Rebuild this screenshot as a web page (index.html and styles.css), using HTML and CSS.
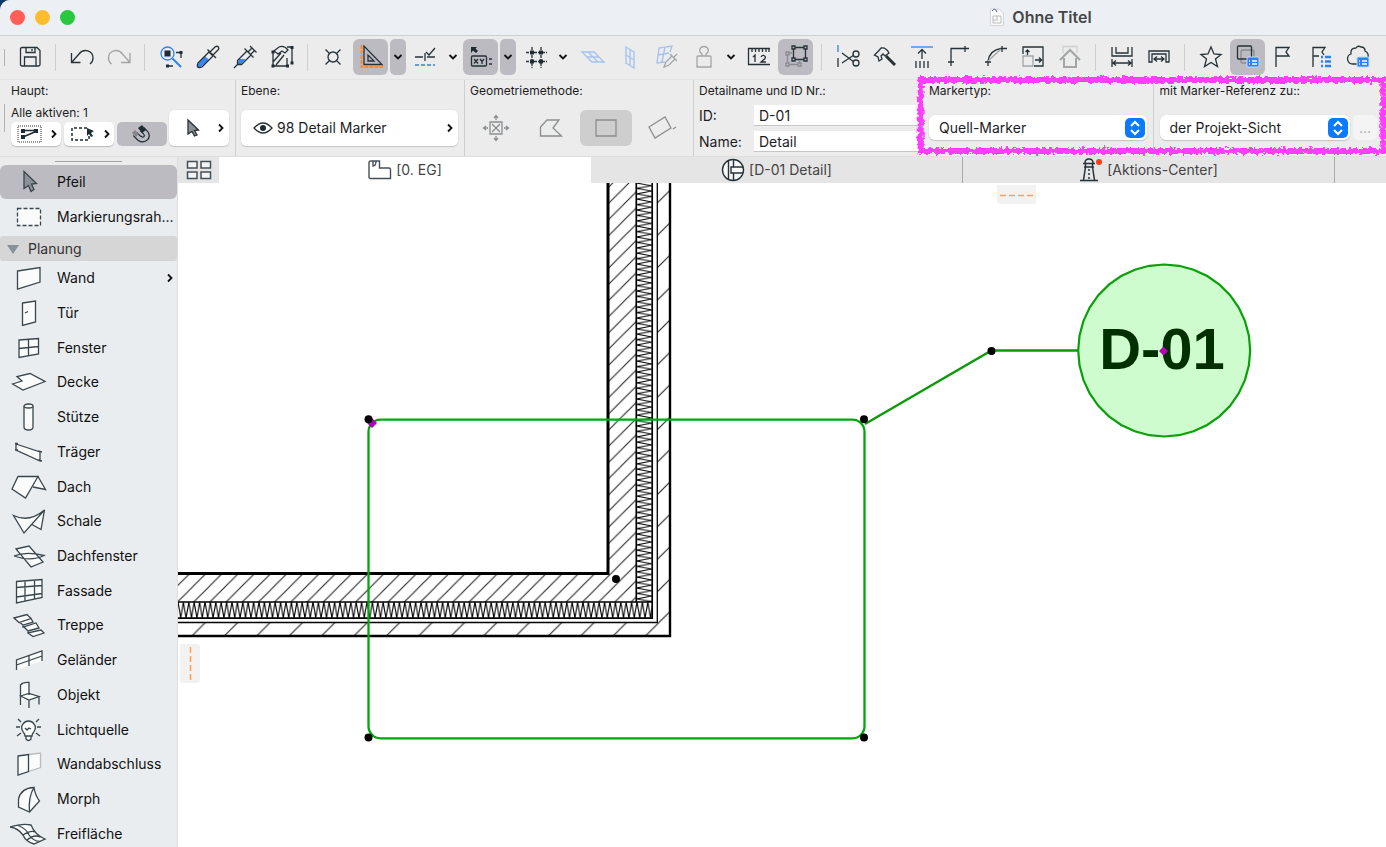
FILE: index.html
```html
<!DOCTYPE html>
<html lang="de">
<head>
<meta charset="utf-8">
<title>Ohne Titel</title>
<link rel="stylesheet" href="styles.css">
</head>
<body>
<div class="window">
<header class="titlebar">
  <div class="lights"><button class="light red" aria-label="Schließen"></button><button class="light yellow" aria-label="Minimieren"></button><button class="light green" aria-label="Zoomen"></button></div>
  <h1 class="doc-title"><svg width="16" height="20" viewBox="0 0 16 20"><path d="M1.500 2H10L14.500 6V18.500H1.500Z" fill="#fafafa" stroke="#d4d4d6"/><path d="M4 9H12V16H4ZM8 9V12M4 13H9" fill="none" stroke="#bbb"/><path d="M3 4Q6 0 8 5" fill="none" stroke="#4a5fb0"/></svg>Ohne Titel</h1>
</header>

<nav class="toolbar" aria-label="Werkzeuge">
  <span class="grip"></span>
  <button class="tb" aria-label="Sichern"><svg class="ic" viewBox="0 0 28 28"><path d="M6 4.500H21L24 7.500V21.500Q24 23 22.500 23H6Q4.500 23 4.500 21.500V6Q4.500 4.500 6 4.500ZM8.500 23V14H20V23M10 4.500V9.500H19V4.500M16 6V8"/></svg></button>
  <span class="sep"></span>
  <button class="tb" aria-label="Rückgängig"><svg class="ic" viewBox="0 0 28 28"><path d="M3.500 10V19.500H12.500M3.500 19.500L11 11C16 4.500 25 8 25 15C25 18 24 19.500 22 21"/></svg></button>
  <button class="tb" aria-label="Wiederholen"><svg class="ic dim" viewBox="0 0 28 28"><path d="M25 10V19.500H16M25 19.500L17.500 11C12.500 4.500 3.500 8 3.500 15C3.500 18 4.500 19.500 6.500 21"/></svg></button>
  <span class="sep"></span>
  <button class="tb" aria-label="Suchen"><svg class="ic" viewBox="0 0 28 28"><path d="M11 23H18M24 10V17M19 9.500H24" stroke-dasharray="5 2"/><path class="solid" d="M7.500 7.500H13.500V13.500H7.500ZM9 21.500H12V24.500H9ZM22.500 8H25.500V11H22.500Z"/><circle class="blue" cx="10.500" cy="10.500" r="6.500"/><path class="blue" d="M15.500 15.500L24 24" stroke-width="2"/></svg></button>
  <button class="tb" aria-label="Pipette"><svg class="ic" viewBox="0 0 28 28"><path class="bluefill" d="M4 21L11 13L15 17L7 24Q5 25 4 24Z"/><path d="M4 20L15 9L19 13L8 24Q5 25 3.500 24Q3 22 4 20ZM13.500 6.500L22 15M16 9L21 4Q23 2.500 24.500 4Q25.500 5.500 24 7L19 12"/></svg></button>
  <button class="tb" aria-label="Parameter übertragen"><svg class="ic" viewBox="0 0 28 28"><path class="bluefill" d="M8 16H14.500L10 21H6.500Z"/><path d="M3 25L6.500 21.500M6.500 21.500V17.500L16 8L20 12L10.500 21.500ZM13.500 5.500L22.500 14.500M17 9L21 5M19.500 11.500L23.500 7.500M19 3L25.500 9.500"/></svg></button>
  <button class="tb" aria-label="Gruppen aussetzen"><svg class="ic" viewBox="0 0 28 28"><path d="M5 8V23H19V15M24 5V20M19 4H24M5 19L13 10M8 22L16 12M6 8L11 4Q16 2 20 7L17 10L14 8L10 11Z"/><path class="solid" d="M3.500 7.500H6.500V10.500H3.500ZM3.500 21.500H6.500V24.500H3.500ZM18 21.500H21V24.500H18ZM22.500 3H25.500V6H22.500ZM22.500 18.500H25.500V21.500H22.500Z"/></svg></button>
  <span class="sep"></span>
  <button class="tb" aria-label="Fangpunkte"><svg class="ic" viewBox="0 0 28 28"><circle cx="13" cy="14" r="5"/><path d="M5.500 6.500L10 11M20.500 6.500L16 11M5.500 21.500L10 17M20.500 21.500L16 17"/></svg></button>
  <button class="tb on" aria-label="Hilfslinien"><svg class="ic" viewBox="0 0 28 28"><path d="M4.500 2V24H26" stroke="#ff8a2b" stroke-dasharray="4 1" stroke-width="2"/><path d="M7 3V21.500H25ZM11 12V18H17Z"/></svg></button>
  <button class="chev on" aria-label="Optionen Hilfslinien"><svg class="ck" viewBox="0 0 10 10"><path d="M1.500 3L5 6.500L8.500 3"/></svg></button>
  <button class="tb" aria-label="Fangrichtung"><svg class="ic" viewBox="0 0 28 28"><path d="M3 14H11M13 10V18M15 14H23M14 9L17 12L23 5"/><path class="blue" d="M3 22H23" stroke-dasharray="4 2"/></svg></button>
  <button class="chev" aria-label="Optionen Fangrichtung"><svg class="ck" viewBox="0 0 10 10"><path d="M1.500 3L5 6.500L8.500 3"/></svg></button>
  <button class="tb on" aria-label="Tracker"><svg class="ic" viewBox="0 0 28 28"><path class="solid" d="M4 4H10L8.500 5.500L11 8L9 10L6 7.500L4 10Z"/><rect x="4.500" y="13" width="15" height="10" rx="1"/><path d="M7 16L11 20.500M11 16L7 20.500M13 16L15 18.500L17 16M15 18.500V21M22 16H25M22 21H25"/></svg></button>
  <button class="chev on" aria-label="Optionen Tracker"><svg class="ck" viewBox="0 0 10 10"><path d="M1.500 3L5 6.500L8.500 3"/></svg></button>
  <button class="tb" aria-label="Raster"><svg class="ic" viewBox="0 0 28 28"><path d="M4 9.500H25M4 18.500H25M10 4V25M19 4V25" stroke-dasharray="3 1"/><path class="solid" d="M8 7.500H12V11.500H8ZM17 7.500H21V11.500H17ZM8 16.500H12V20.500H8ZM17 16.500H21V20.500H17Z"/></svg></button>
  <button class="chev spaced" aria-label="Optionen Raster"><svg class="ck" viewBox="0 0 10 10"><path d="M1.500 3L5 6.500L8.500 3"/></svg></button>
  <button class="tb" aria-label="Grundebene"><svg class="ic pale" viewBox="0 0 28 28"><path d="M3 9H15L25 19H13ZM9 9L19 19M8 14H20"/></svg></button>
  <button class="tb" aria-label="Wandebene"><svg class="ic pale" viewBox="0 0 28 28"><path d="M10 4L18 9V25L10 20ZM14 6V22M10 12L18 17"/></svg></button>
  <button class="tb" aria-label="Ebene aufnehmen"><svg class="ic pale" viewBox="0 0 28 28"><path d="M12 19L4 20L6 5L19 3L17 9M12 4L9 19M5 12L16 10"/><path class="dim" d="M11 24L13 19L19 13L22 16L16 22ZM17 11L24 18M21 14L24 11"/></svg></button>
  <button class="tb" aria-label="Schwerkraft"><svg class="ic dim" viewBox="0 0 28 28"><path d="M8 13H20Q21 13 21 14V24H7V14Q7 13 8 13ZM12 13V11Q9 9 10 6Q11 3.500 14 3.500Q17 3.500 18 6Q19 9 16 11V13"/></svg></button>
  <button class="chev" aria-label="Optionen Schwerkraft"><svg class="ck" viewBox="0 0 10 10"><path d="M1.500 3L5 6.500L8.500 3"/></svg></button>
  <button class="tb" aria-label="Messen"><svg class="ic" viewBox="0 0 28 28"><path d="M25 5.500H3.500V21.500H25M7 6V9M10.500 6V9M14 6V9M17.500 6V9M21 6V9M24 6V9M8 14L10 12V19M16 14Q17 12 19 12.500Q21 13.500 20 15.500L16 19H21"/></svg></button>
  <button class="tb on" aria-label="Gruppe bearbeiten"><svg class="ic" viewBox="0 0 28 28"><path class="faded" d="M7 10H10M5.500 12V20M7 21.500H16M17.500 20V18M4 9H7V12H4ZM4 20H7V23H4ZM16 20H19V23H16Z"/><path d="M13 4.500H22M23.500 6V15M22 16.500H13M11.500 15V6M10 3H13V6H10ZM22 3H25V6H22ZM10 15H13V18H10ZM22 15H25V18H22Z"/></svg></button>
  <span class="sep"></span>
  <button class="tb" aria-label="Trennen"><svg class="ic" viewBox="0 0 28 28"><path class="blue" d="M4 2V9"/><path d="M4 15V24M8 10L20 19M8 20L20 12"/><circle cx="22" cy="11" r="3"/><circle cx="22" cy="20" r="3"/></svg></button>
  <button class="tb" aria-label="Anpassen"><svg class="ic" viewBox="0 0 28 28"><path d="M3.500 12L8 7.500L10 5Q15 4 18 10L14 13L12 11L10 13L11 16L8 18L7 14Z"/><path d="M15 13L24 22" stroke-width="3"/></svg></button>
  <button class="tb" aria-label="Höhe anpassen"><svg class="ic" viewBox="0 0 28 28"><path class="blue" d="M3 4H25"/><path d="M14 16V7M10 10.500L14 6.500L18 10.500M8 18V25M12 18V25M16 18V25M20 18V25"/></svg></button>
  <button class="tb" aria-label="Verbinden"><svg class="ic" viewBox="0 0 28 28"><path d="M6 23V5.500H24M20 3V9M3 19H9"/></svg></button>
  <button class="tb" aria-label="Abrunden"><svg class="ic" viewBox="0 0 28 28"><path d="M6 23V18Q8 7 19 5.500H25M20 3V9M3 19H9"/><path class="dim" d="M6 18L19 6"/></svg></button>
  <button class="tb" aria-label="Größe ändern"><svg class="ic" viewBox="0 0 28 28"><path d="M4 11V4H24V23H15M8.500 12V7M6.500 9L8.500 7L10.500 9M16 17H22M20 14.500L22.500 17L20 19.500"/><path class="dim" d="M4 13H14V23H4Z"/></svg></button>
  <button class="tb" aria-label="Dach anpassen"><svg class="ic dim" viewBox="0 0 28 28"><path d="M7 10V3.500H21V10" opacity=".4"/><path d="M4 17L14 7L24 17M8 15V24H20V15" stroke-width="2"/></svg></button>
  <span class="sep"></span>
  <button class="tb" aria-label="Bemaßung"><svg class="ic" viewBox="0 0 28 28"><path d="M4 4V13H24V4M8 4V10H20V4M4 16V24M24 16V24M5 20H23M8 17.500L5 20L8 22.500M20 17.500L23 20L20 22.500"/></svg></button>
  <button class="tb" aria-label="Innenbemaßung"><svg class="ic" viewBox="0 0 28 28"><path d="M4 19V8H24V19H21V11H7V19ZM9 16H19M12 13.500L9 16L12 18.500M16 13.500L19 16L16 18.500"/></svg></button>
  <span class="sep"></span>
  <button class="tb" aria-label="Favoriten"><svg class="ic" viewBox="0 0 28 28"><path d="M14 4L17 11L24 11.500L18.500 16L20.500 23.500L14 19.500L7.500 23.500L9.500 16L4 11.500L11 11Z"/></svg></button>
  <button class="tb on" aria-label="Ausschnitte"><svg class="ic" viewBox="0 0 28 28"><rect class="faded" x="7" y="7" width="13" height="13" rx="2"/><rect x="3.500" y="3" width="14" height="13" rx="1"/><rect class="tile" x="13" y="14" width="12" height="10" rx="1"/><path class="rows" d="M15 18H16M18 18H23M15 21H16M18 21H23"/></svg></button>
  <button class="tb" aria-label="Markierung"><svg class="ic" viewBox="0 0 28 28"><path d="M5 24V4.500H18L15 9L18 13H5"/></svg></button>
  <button class="tb" aria-label="Markierungsliste"><svg class="ic" viewBox="0 0 28 28"><path d="M5 24V4.500H17L14 9L16 12M5 13H11"/><path class="blue" d="M13 14H15M17 14H23M13 18.500H15M17 18.500H23M13 23H15M17 23H23" stroke-width="2.500"/></svg></button>
  <button class="tb" aria-label="Cloud"><svg class="ic" viewBox="0 0 28 28"><path d="M12 21H8Q3 21 2.500 16Q2.500 12 6 11Q5 5 11 5Q13 2 16 4Q20 4 20 8Q24 10 23 14"/><rect class="tile" x="12" y="14" width="12" height="10" rx="1"/><path class="rows" d="M14 18H15M17 18H22M14 21H15M17 21H22"/></svg></button>
  <button class="tb" aria-label="Kamera"><svg class="ic" viewBox="0 0 28 28"><rect x="5" y="8" width="18" height="12" rx="2"/></svg></button>
</nav>

<section class="infobar" aria-label="Infofenster">
  <div class="panel haupt">
    <span class="grip low"></span>
    <p class="cap">Haupt:</p>
    <div class="body">
      <div class="sel">
        <p class="cap">Alle aktiven: 1</p>
        <div class="trio">
          <button class="mini" aria-label="Auswahl"><svg width="26" height="18" viewBox="0 0 26 18"><rect x="1" y="1" width="23" height="16" fill="none" stroke="#333" stroke-dasharray="1 1"/><path d="M5 5.500H20M6 12L20 6" fill="none" stroke="#1d2b33" stroke-width="1.500"/><path fill="#1d2b33" d="M4 4H8V8H4ZM4 10H8V14H4ZM17 4H21V8H17Z"/></svg><svg class="ck" viewBox="0 0 10 10"><path d="M3 1.500L6.500 5L3 8.500"/></svg></button>
          <button class="mini" aria-label="Rahmen"><svg width="26" height="18" viewBox="0 0 26 18"><path d="M17 3H2V15H19V9" fill="none" stroke="#1d2b33" stroke-dasharray="3 2" stroke-width="1.500"/><path fill="#1d2b33" d="M17 3L24 6L21 8L23 11L21 12L19 9L17 11Z"/></svg><svg class="ck" viewBox="0 0 10 10"><path d="M3 1.500L6.500 5L3 8.500"/></svg></button>
          <button class="mini pressed" aria-label="Magnet"><svg width="22" height="20" viewBox="0 0 22 20"><path d="M5 10L9 14Q13 17 16 14Q18 11 15 8L12 5" fill="none" stroke="#1d2b33" stroke-width="6"/><path d="M5 10L9 14Q13 17 16 14Q18 11 15 8L12 5" fill="none" stroke="#bcbbc1" stroke-width="3.500"/><path d="M2 9L5 6L9 10L6 13Z" fill="#84868b"/><path d="M8 4L12 1L16 6L12 9Z" fill="#1d2b33"/></svg></button>
        </div>
      </div>
      <button class="field arrow-btn" aria-label="Pfeilwerkzeug"><svg width="16" height="20" viewBox="0 0 16 20"><path d="M3 2L13.500 12L9.500 12.500L12 17L9.500 18L7 13.500L3 16Z" fill="#8d9296" stroke="#263238" stroke-width="1.300"/></svg><svg class="ck" viewBox="0 0 10 10"><path d="M3 1.500L6.500 5L3 8.500"/></svg></button>
    </div>
  </div>
  <div class="panel">
    <p class="cap">Ebene:</p>
    <div class="body"><button class="field layer"><svg width="20" height="14" viewBox="0 0 20 14"><path d="M1 7Q10 -3 19 7Q10 17 1 7Z" fill="#fff" stroke="#263238" stroke-width="1.300"/><circle cx="10" cy="7" r="3" fill="#1d2b33"/></svg><span class="grow">98 Detail Marker</span><svg class="ck" viewBox="0 0 10 10"><path d="M3 1.500L6.500 5L3 8.500"/></svg></button></div>
  </div>
  <div class="panel">
    <p class="cap">Geometriemethode:</p>
    <div class="body geo">
      <button class="gm" aria-label="Automatisch"><svg class="ic grey" viewBox="0 0 28 28"><path d="M8 8H20V20H8ZM10 10L18 18M18 10L10 18M14 6V2M12 4L14 1.500L16 4M14 22V26M12 24L14 26.500L16 24M6 14H2M4 12L1.500 14L4 16M22 14H26M24 12L26.500 14L24 16"/></svg></button>
      <button class="gm" aria-label="Polygon"><svg class="ic grey" viewBox="0 0 28 28"><path d="M3.500 22V13L10 6H22L16 14L24.500 22Z"/></svg></button>
      <button class="gm pressed" aria-label="Rechteck"><svg class="ic grey" viewBox="0 0 28 28"><path d="M4 6H24V22H4Z"/></svg></button>
      <button class="gm" aria-label="Gedrehtes Rechteck"><svg class="ic grey" viewBox="0 0 28 28"><path d="M2 13L18 3L24 14L8 24ZM26 15L29 13"/></svg></button>
    </div>
  </div>
  <div class="panel detail">
    <p class="cap">Detailname und ID Nr.:</p>
    <div class="pairs">
      <label for="did">ID:</label><input id="did" type="text" value="D-01">
      <label for="dname">Name:</label><input id="dname" type="text" value="Detail">
    </div>
  </div>
  <div class="marked">
    <div class="panel">
      <label class="cap" for="mtype">Markertyp:</label>
      <div class="body low-body"><div class="pop"><select id="mtype"><option>Quell-Marker</option></select><svg class="knob" viewBox="0 0 20 20"><path d="M6 8L10 4L14 8M6 12L10 16L14 12"/></svg></div></div>
    </div>
    <div class="panel">
      <label class="cap" for="mref">mit Marker-Referenz zu::</label>
      <div class="body low-body"><div class="pop"><select id="mref"><option>der Projekt-Sicht</option></select><svg class="knob" viewBox="0 0 20 20"><path d="M6 8L10 4L14 8M6 12L10 16L14 12"/></svg></div><button class="more" disabled>...</button></div>
    </div>
    <svg class="scribble" aria-hidden="true">
      <defs><filter id="rough" x="-5%" y="-10%" width="110%" height="120%"><feTurbulence type="fractalNoise" baseFrequency="0.300" numOctaves="2" seed="4"/><feDisplacementMap in="SourceGraphic" scale="7" xChannelSelector="R" yChannelSelector="G"/></filter></defs>
      <rect x="1%" y="5" width="98%" height="71" filter="url(#rough)"/>
    </svg>
  </div>
</section>

<div class="main">
<aside class="sidebar">
  <div class="handle"><span></span></div>
  <button class="tool picked"><svg viewBox="0 0 36 28"><path class="shade" d="M13 3.500L25.500 15.500L20.500 16L23 21.500L20 23.500L17.500 17.500L13 20.500Z"/></svg>Pfeil</button>
  <button class="tool"><svg viewBox="0 0 36 28"><path d="M6.500 5.500H29.500V22.500H6.500Z" stroke-dasharray="4 2"/></svg>Markierungsrah...</button>
  <button class="group"><svg width="12" height="10" viewBox="0 0 12 10"><path d="M0 1H12L6 10Z" fill="#8b9094"/></svg>Planung</button>
  <div class="tools">
    <button class="tool"><svg viewBox="0 0 36 28"><path d="M6.500 7L29 3.500V18L6.500 25Z"/></svg><span class="grow">Wand</span><svg class="ck more-arrow" viewBox="0 0 10 10"><path d="M3 1.500L6.500 5L3 8.500"/></svg></button>
    <button class="tool"><svg viewBox="0 0 36 28"><path d="M11.500 4L24.500 2V23L11.500 26.500ZM14 14L17 12.500"/></svg>Tür</button>
    <button class="tool"><svg viewBox="0 0 36 28"><path d="M8 6L27.500 4.500V20L8 23.500ZM17.500 5.500V22M8 14.500L27.500 12.500"/></svg>Fenster</button>
    <button class="tool"><svg viewBox="0 0 36 28"><path d="M1.500 16L11 13L6 8.500L19 5.500L34 13.500L12 22Z"/></svg>Decke</button>
    <button class="tool"><svg viewBox="0 0 36 28"><path d="M13 3.500V24Q13 27 17.500 27Q22 27 22 24V3.500"/><ellipse cx="17.500" cy="3" rx="4.500" ry="2"/></svg>Stütze</button>
    <button class="tool"><svg viewBox="0 0 36 28"><path d="M5 6L29 14V23L5 12ZM4 5.500H7M27 13L31 14M4 12H7M27 22L31 23"/></svg>Träger</button>
    <button class="tool"><svg viewBox="0 0 36 28"><path d="M7 3.500H27L14.500 25L1 16ZM27 3.500L34.500 16.500L22 14"/></svg>Dach</button>
    <button class="tool"><svg viewBox="0 0 36 28"><path d="M2.500 8.500Q18 16 33.500 3L13 26ZM33.500 3L30 22.500L21 17.500"/></svg>Schale</button>
    <button class="tool"><svg viewBox="0 0 36 28"><path d="M5 7L18 4L32 20L20 25ZM3 14Q15 9 33 13.500Q20 20 3 14"/></svg>Dachfenster</button>
    <button class="tool"><svg viewBox="0 0 36 28"><path d="M5.500 4.500L31 2.500V20.500L5.500 26ZM14 4V24M23.500 3V22M5.500 10.500L31 8.500M5.500 20L31 16.500"/></svg>Fassade</button>
    <button class="tool"><svg viewBox="0 0 36 28"><path d="M3 7L16 3.500L20 7.500L8 11.500ZM8 11.500L20 7.500L22 11L12 14L9 11.500M12 14V16L25 12L28 17L17 20L13 16M17 20V22L30 19L33 22L22 25.500L17 22"/></svg>Treppe</button>
    <button class="tool"><svg viewBox="0 0 36 28"><path d="M5.500 24V14L31 5V15M5.500 19L31 10M18 9.500V20"/></svg>Geländer</button>
    <button class="tool"><svg viewBox="0 0 36 28"><path d="M9.500 24V4Q12 1 18 1.500V14M9.500 15L18 12.500L28 15.500L18 19ZM18 19V27M28 15.500V23.500"/></svg>Objekt</button>
    <button class="tool"><svg viewBox="0 0 36 28"><path d="M14 20Q14 18 12.500 16.500Q9 11 12 8Q14 5 17.500 5Q21 5 23 8Q26 11 22.500 16.500Q21 18 21 20ZM15 20V23Q17.500 26 20 23V20M14 12L16 14L18 12L20 13M7 3L10 6M28 3L25 6M5 11H9M26 11H30M6 20L10 17M29 20L25 17"/></svg>Lichtquelle</button>
    <button class="tool"><svg viewBox="0 0 36 28"><path class="light-line" d="M17.500 4.500L29.500 3V17.500L17.500 21.500"/><path d="M7 6L17.500 4.500V21.500L7 25Z"/></svg>Wandabschluss</button>
    <button class="tool"><svg viewBox="0 0 36 28"><path d="M7.500 22V14Q10 3 23 2.500Q17 12 18.500 27ZM23 2.500Q24 10 28.500 16L18.500 27"/></svg>Morph</button>
    <button class="tool"><svg viewBox="0 0 36 28"><path d="M-1 7Q12 3 20 5Q24 15 34 19L23 24Q15 22 12 15Q7 8 -1 7M7 5.500Q16 9 18 15Q22 21 29 21.500M12 15Q20 10 24 12M16 20Q23 14 29 17"/></svg>Freifläche</button>
  </div>
</aside>

<div class="work">
  <div class="tabs" role="tablist">
    <button class="tab overview" aria-label="Übersicht"><svg width="26" height="20" viewBox="0 0 26 20"><path d="M1.500 1.500H11V8H1.500ZM15 1.500H24.500V8H15ZM1.500 12H11V18.500H1.500ZM15 12H24.500V18.500H15Z" fill="#f4f4f4" stroke="#455058" stroke-width="1.500"/></svg></button>
    <button class="tab active" role="tab"><svg width="24" height="22" viewBox="0 0 24 22"><path d="M3 2H11.500V9H21Q22.500 9 22.500 10.500V19.500H3Q1 19.500 1 18V4Q1 2 3 2ZM5 2V7Q8 7 8 2" fill="#fff" stroke="#455058" stroke-width="1.400"/></svg>[0. EG]</button>
    <button class="tab" role="tab"><svg width="24" height="24" viewBox="0 0 24 24"><circle cx="12" cy="12" r="10.500" fill="#f8f8f8" stroke="#263238" stroke-width="1.400"/><path d="M7.500 3V21M12.500 2V9M12.500 22V15M22 9H10V15H22" fill="none" stroke="#263238" stroke-width="1.400"/></svg>[D-01 Detail]</button>
    <button class="tab" role="tab"><svg width="24" height="24" viewBox="0 0 24 24"><path d="M4 5.500H16M5 9H15M6.500 9L4.500 22M13.500 9L15.500 22M1 22.500H19M6 5Q6 1 10 1Q14 1 14 5M6.500 5V9M13.500 5V9M10 11V13M10 15V17M10 19V21" fill="none" stroke="#263238" stroke-width="1.500"/><circle cx="20" cy="4" r="3" fill="#ff3b18"/></svg>[Aktions-Center]</button>
    <span class="tab rest"></span>
  </div>
  <div class="canvas">
    <svg class="plan" role="img" aria-label="Grundriss">
      <defs>
        <pattern id="solid-hatch" patternUnits="userSpaceOnUse" x="1.900" y="0" width="16.200" height="16.200"><path d="M-2 18.200L18.200 -2M-2 2L2 -2M14.200 18.200L18.200 14.200" stroke="#222" stroke-width="1.100"/></pattern>
        <pattern id="brick-hatch" patternUnits="userSpaceOnUse" x="17.900" y="0" width="32.400" height="32.400"><path d="M-2 34.400L34.400 -2M-2 2L2 -2M30.400 34.400L34.400 30.400" stroke="#222" stroke-width="1.100"/></pattern>
        <pattern id="wool-h" patternUnits="userSpaceOnUse" x="178" y="602" width="5.400" height="16"><path d="M0 0L2.700 16L5.400 0" fill="none" stroke="#000" stroke-width="1.100"/></pattern>
        <pattern id="wool-v" patternUnits="userSpaceOnUse" x="636" y="183" width="16" height="5.400"><path d="M0 0L16 2.700L0 5.400" fill="none" stroke="#000" stroke-width="1.100"/></pattern>
      </defs>
      <g transform="translate(-178 -183)">
        <path d="M608 180H636V602H170V574H608Z" fill="url(#solid-hatch)"/>
        <path d="M657 180H670V636H170V622.500H657Z" fill="url(#brick-hatch)"/>
        <path d="M636 180H652V602H636Z" fill="url(#wool-v)"/>
        <path d="M170 602H652V618H170Z" fill="url(#wool-h)"/>
        <path d="M608 180V573.500H170" fill="none" stroke="#000" stroke-width="3"/>
        <path d="M636.300 180V602M652.200 180V618.200H170M170 602H652" fill="none" stroke="#000" stroke-width="1.700"/>
        <path d="M657.300 180V622.500H170" fill="none" stroke="#000" stroke-width="1.300"/>
        <path d="M670 180V636H170" fill="none" stroke="#000" stroke-width="2.400"/>
        <rect x="368.500" y="419.700" width="496" height="318.600" rx="12" fill="none" stroke="#00a80a" stroke-width="2.300"/>
        <path d="M865 424L991.500 350.500H1078" fill="none" stroke="#0a9a0a" stroke-width="2.300"/>
        <path transform="translate(1164.200 350.500)" d="M86 0L84.700 14.900L80.800 29.400L74.500 43L65.900 55.300L55.300 65.900L43 74.500L29.400 80.800L14.900 84.700L0 86L-14.900 84.700L-29.400 80.800L-43 74.500L-55.300 65.900L-65.900 55.300L-74.500 43L-80.800 29.400L-84.700 14.900L-86 0L-84.700 -14.900L-80.800 -29.400L-74.500 -43L-65.900 -55.300L-55.300 -65.900L-43 -74.500L-29.400 -80.800L-14.900 -84.700L0 -86L14.900 -84.700L29.400 -80.800L43 -74.500L55.300 -65.900L65.900 -55.300L74.500 -43L80.800 -29.400L84.700 -14.900Z" fill="#cffccf" stroke="#0aa00a" stroke-width="2.200"/>
        <text class="tag" x="1162" y="369" text-anchor="middle">D-01</text>
        <path d="M372 418L377 423L372 428L367 423ZM1163.500 346.500L1168 351L1163.500 355.500L1159 351Z" fill="#b400b4"/>
        <g fill="#000"><circle cx="368.500" cy="419.300" r="4"/><circle cx="864" cy="419.300" r="4"/><circle cx="368.500" cy="737.500" r="4"/><circle cx="864" cy="737.500" r="4"/><circle cx="616" cy="579" r="4"/><circle cx="991.500" cy="351" r="4"/></g>
        <path d="M997 185H1036V201Q1036 204 1033 204H1000Q997 204 997 201ZM180 644H197Q200 644 200 647V680Q200 683 197 683H180Z" fill="#f2f2f2"/>
        <path d="M1000 195.500H1034M190.500 647V681" stroke="#ffa050" stroke-width="1.500" stroke-dasharray="6 3"/>
      </g>
    </svg>
  </div>
</div>
</div>
</div>
</body>
</html>
```
FILE: styles.css
```css
* { box-sizing: border-box; }
body { margin: 0; background: #0d3b63; font-family: Inter, "Liberation Sans", sans-serif; font-size: 14px; line-height: 16px; color: #1d1d1f; }
button, input, select { font: inherit; color: inherit; border: 0; margin: 0; padding: 0; background: none; }
p, h1 { margin: 0; }
.window { display: flex; flex-direction: column; height: 100vh; overflow: hidden; background: #ececec; border-top-left-radius: 10px; }
.grow { flex: 1; text-align: left; }

.titlebar { display: flex; align-items: center; height: 36px; flex: none; background: #ecf0f4; border-bottom: 1px solid #cdcfd1; padding-bottom: 1px; }
.lights { display: flex; gap: 10px; padding-left: 10px; }
.light { width: 15px; height: 15px; border-radius: 50%; }
.red { background: #ff5f57; }
.yellow { background: #febc2e; }
.green { background: #28c840; }
.doc-title { display: flex; align-items: center; gap: 7px; flex: 1; justify-content: center; padding-left: 620px; font-size: 16px; font-weight: 600; line-height: 20px; color: #444648; white-space: nowrap; }

.toolbar { display: flex; align-items: center; gap: 2px; height: 43px; flex: none; padding-left: 4px; padding-bottom: 1px; overflow: hidden; }
.grip { width: 6px; height: 17px; border-left: 1px solid #b4b4b4; flex: none; }
.tb { display: grid; place-items: center; width: 35px; height: 36px; border-radius: 6px; flex: none; }
.chev { display: grid; place-items: center; width: 16px; height: 36px; border-radius: 5px; flex: none; }
.spaced { margin-right: 2px; }
.on { background: #bcbbc1; }
.sep { width: 13px; height: 27px; flex: none; background: linear-gradient(#cfcfcf, #cfcfcf) center / 1px 100% no-repeat; }
.ic { width: 28px; height: 28px; fill: none; stroke: #263238; stroke-width: 1.3; overflow: visible; }
.ic .solid { fill: #1d2b33; stroke: none; }
.ic .blue { stroke: #2f80f5; }
.ic .bluefill { fill: #3b86f7; stroke: none; }
.ic .faded { stroke: #8b8c92; }
.ic.dim, .ic .dim { stroke: #a2a5a7; }
.ic.pale { stroke: #a3c2f0; }
.ic.grey { stroke: #8b8e90; }
.ic .tile { fill: #2f80f5; stroke: #bfdcff; stroke-width: 1; }
.ic .rows { stroke: #fff; }
.ck { width: 10px; height: 10px; fill: none; stroke: #111; stroke-width: 1.8; flex: none; }

.infobar { display: flex; height: 78px; flex: none; border-top: 1px solid #e2e2e2; border-bottom: 1px solid #dedede; }
.panel { position: relative; display: flex; flex-direction: column; flex: 0 0 229px; padding: 4px 6px 0 5px; border-right: 1px solid #cfcfcf; }
.haupt { flex-basis: 236px; padding-left: 11px; }
.detail { flex-basis: 226px; padding-right: 0; border-right: 0; }
.low { position: absolute; left: 4px; top: 24px; height: 28px; }
.cap { font-size: 12px; line-height: 14px; white-space: nowrap; }
.body { flex: 1; display: flex; align-items: flex-end; padding-bottom: 10px; }
.sel { display: flex; flex-direction: column; gap: 2px; }
.trio { display: flex; gap: 3px; margin-right: 2px; }
.mini { display: flex; align-items: center; justify-content: flex-end; gap: 6px; width: 50px; height: 24px; padding-right: 2px; border-radius: 5px; background: #fff; box-shadow: 0 1px 1px #bbb; }
.mini.pressed { justify-content: center; background: #bcbbc1; box-shadow: none; }
.field { display: flex; align-items: center; height: 36px; border-radius: 5px; background: #fff; box-shadow: 0 1px 1px #c4c4c4, 0 0 1px #ccc; }
.arrow-btn { width: 60px; gap: 15px; justify-content: flex-end; padding-right: 3px; }
.layer { flex: 1; gap: 4px; padding: 0 3px 0 12px; }
.geo { gap: 3px; }
.gm { width: 52px; height: 36px; border-radius: 6px; display: grid; place-items: center; }
.gm.pressed { background: #cecece; }
.pairs { display: grid; grid-template-columns: 50px 1fr; gap: 5px; padding-top: 7px; align-items: center; }
.pairs input { width: 100%; height: 21px; padding: 0 5px; background: #fff; border-bottom: 1px solid #c6c6c6; min-width: 0; }
.marked { position: relative; display: flex; flex: 1; }
.marked .panel { flex: 1 1 0; padding-left: 9px; }
.marked .panel:last-of-type { border-right: 0; padding-left: 6px; padding-right: 9px; }
.low-body { gap: 3px; padding-bottom: 16px; }
.pop { position: relative; flex: 1; }
.pop select { appearance: none; display: block; width: 100%; height: 25px; padding: 0 26px 0 10px; border-radius: 6px; background: #fff; box-shadow: 0 1px 1px #c4c4c4, 0 0 1px #ccc; }
.knob { position: absolute; right: 2px; top: 3px; width: 20px; height: 20px; border-radius: 5px; background: #0a7bff; fill: none; stroke: #fff; stroke-width: 2; pointer-events: none; }
.more { width: 24px; height: 25px; border-radius: 5px; background: #f4f4f4; color: #a8a8a8; }
.scribble { position: absolute; left: -4px; top: -5px; width: calc(100% + 6px); height: 84px; overflow: visible; pointer-events: none; fill: none; stroke: #ff3cff; stroke-width: 6; }

.main { display: flex; flex: 1; min-height: 0; }
.sidebar { display: flex; flex-direction: column; flex: 0 0 178px; background: #e9edf0; border-right: 1px solid #dcdfe1; overflow: hidden; }
.handle { display: flex; justify-content: center; align-items: center; height: 8px; flex: none; background: #ececec; }
.handle span { width: 67px; height: 1px; background: #a2a2a2; }
.tool { display: flex; align-items: center; gap: 10px; width: 100%; height: 35px; padding-left: 11px; color: #111; white-space: nowrap; flex: none; }
.tool > svg:first-child { width: 36px; height: 28px; fill: #fafbfb; stroke: #3a464d; stroke-width: 1.3; flex: none; overflow: visible; }
.tool .shade { fill: #8d9296; }
.tool .light-line { stroke: #b9bdc0; }
.picked { background: #bcbbc1; border-radius: 6px; height: 34px; }
.group { display: flex; align-items: center; gap: 9px; height: 25px; margin-top: 2px; padding-left: 7px; background: #d6d6d6; border-radius: 3px; color: #333; flex: none; }
.more-arrow { margin-right: 2px; }
.tools { display: grid; grid-auto-rows: 1fr; flex: 1; min-height: 0; margin-bottom: -4px; }
.tools .tool { height: auto; min-height: 0; }
.work { display: flex; flex-direction: column; flex: 1; min-width: 0; }
.tabs { display: flex; height: 26px; flex: none; background: #e5e5e5; }
.tab { display: flex; align-items: center; justify-content: center; gap: 4px; flex: 0 0 372px; border-right: 1px solid #aaa; color: #444; }
.overview { flex-basis: 41px; border: 0; }
.active { background: #fff; border: 0; }
.rest { flex: 1; border: 0; }
.canvas { flex: 1; min-height: 0; background: #fff; }
.plan { display: block; width: 100%; height: 100%; }
.tag { font: bold 58px "Liberation Sans", Arial, sans-serif; fill: #003000; }
```
